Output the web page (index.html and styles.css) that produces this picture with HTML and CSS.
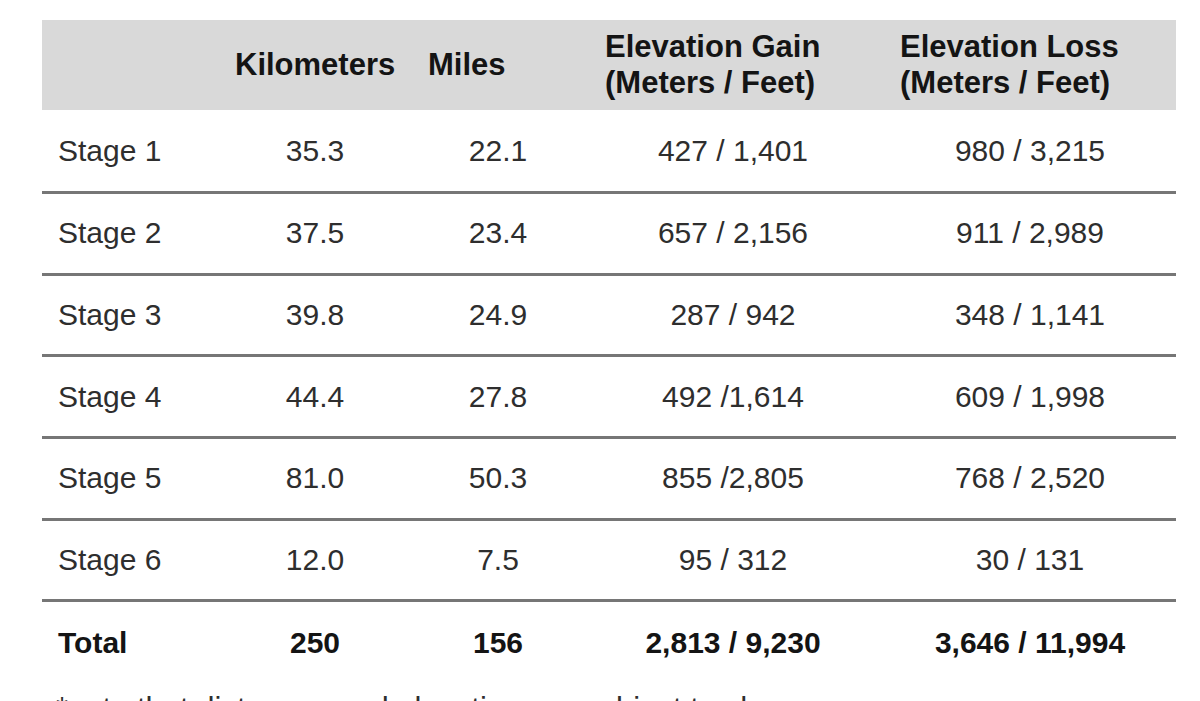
FILE: index.html
```html
<!DOCTYPE html>
<html>
<head>
<meta charset="utf-8">
<link rel="stylesheet" href="styles.css">
</head>
<body>
<div class="page">
  <div class="table">
    <div class="row head">
      <div class="cell"></div>
      <div class="cell h-km">Kilometers</div>
      <div class="cell h-mi">Miles</div>
      <div class="cell h-gain">Elevation Gain<br>(Meters / Feet)</div>
      <div class="cell h-loss">Elevation Loss<br>(Meters / Feet)</div>
    </div>
    <div class="row body first">
      <div class="cell label">Stage 1</div>
      <div class="cell num">35.3</div>
      <div class="cell num">22.1</div>
      <div class="cell num">427 / 1,401</div>
      <div class="cell num">980 / 3,215</div>
    </div>
    <div class="row body">
      <div class="cell label">Stage 2</div>
      <div class="cell num">37.5</div>
      <div class="cell num">23.4</div>
      <div class="cell num">657 / 2,156</div>
      <div class="cell num">911 / 2,989</div>
    </div>
    <div class="row body">
      <div class="cell label">Stage 3</div>
      <div class="cell num">39.8</div>
      <div class="cell num">24.9</div>
      <div class="cell num">287 / 942</div>
      <div class="cell num">348 / 1,141</div>
    </div>
    <div class="row body">
      <div class="cell label">Stage 4</div>
      <div class="cell num">44.4</div>
      <div class="cell num">27.8</div>
      <div class="cell num">492 /1,614</div>
      <div class="cell num">609 / 1,998</div>
    </div>
    <div class="row body">
      <div class="cell label">Stage 5</div>
      <div class="cell num">81.0</div>
      <div class="cell num">50.3</div>
      <div class="cell num">855 /2,805</div>
      <div class="cell num">768 / 2,520</div>
    </div>
    <div class="row body">
      <div class="cell label">Stage 6</div>
      <div class="cell num">12.0</div>
      <div class="cell num">7.5</div>
      <div class="cell num">95 / 312</div>
      <div class="cell num">30 / 131</div>
    </div>
    <div class="row body total">
      <div class="cell label">Total</div>
      <div class="cell num">250</div>
      <div class="cell num">156</div>
      <div class="cell num">2,813 / 9,230</div>
      <div class="cell num">3,646 / 11,994</div>
    </div>
  </div>
  <p class="note">*note that distances and elevation are subject to change</p>
</div>
</body>
</html>
```

FILE: styles.css
```css
html, body {
  margin: 0;
  padding: 0;
  background: #ffffff;
}

body {
  font-family: "Liberation Sans", Arial, sans-serif;
  color: #2e2e2e;
  overflow: hidden;
  height: 701px;
}

.page {
  padding-top: 20px;
  padding-left: 42px;
}

.table {
  width: 1134px;
}

.row {
  display: grid;
  grid-template-columns: 174px 198px 168px 302px 292px;
  align-items: center;
  box-sizing: border-box;
}

.head {
  height: 90px;
  background: #d9d9d9;
  font-weight: bold;
  font-size: 31px;
  line-height: 36px;
  color: #141414;
}

.h-km { padding-left: 19px; }
.h-mi { padding-left: 14px; }
.h-gain { padding-left: 23px; }
.h-loss { padding-left: 16px; }

.body {
  height: 81.6px;
  border-bottom: 3px solid #767676;
  font-size: 30px;
}

.body.first {
  height: 84.2px;
}

.body.total {
  border-bottom: none;
  font-weight: bold;
  color: #141414;
}

.label {
  padding-left: 16px;
}

.num {
  text-align: center;
}

.note {
  margin: 7px 0 0 14px;
  font-size: 31px;
  white-space: nowrap;
  color: #2e2e2e;
}
```
